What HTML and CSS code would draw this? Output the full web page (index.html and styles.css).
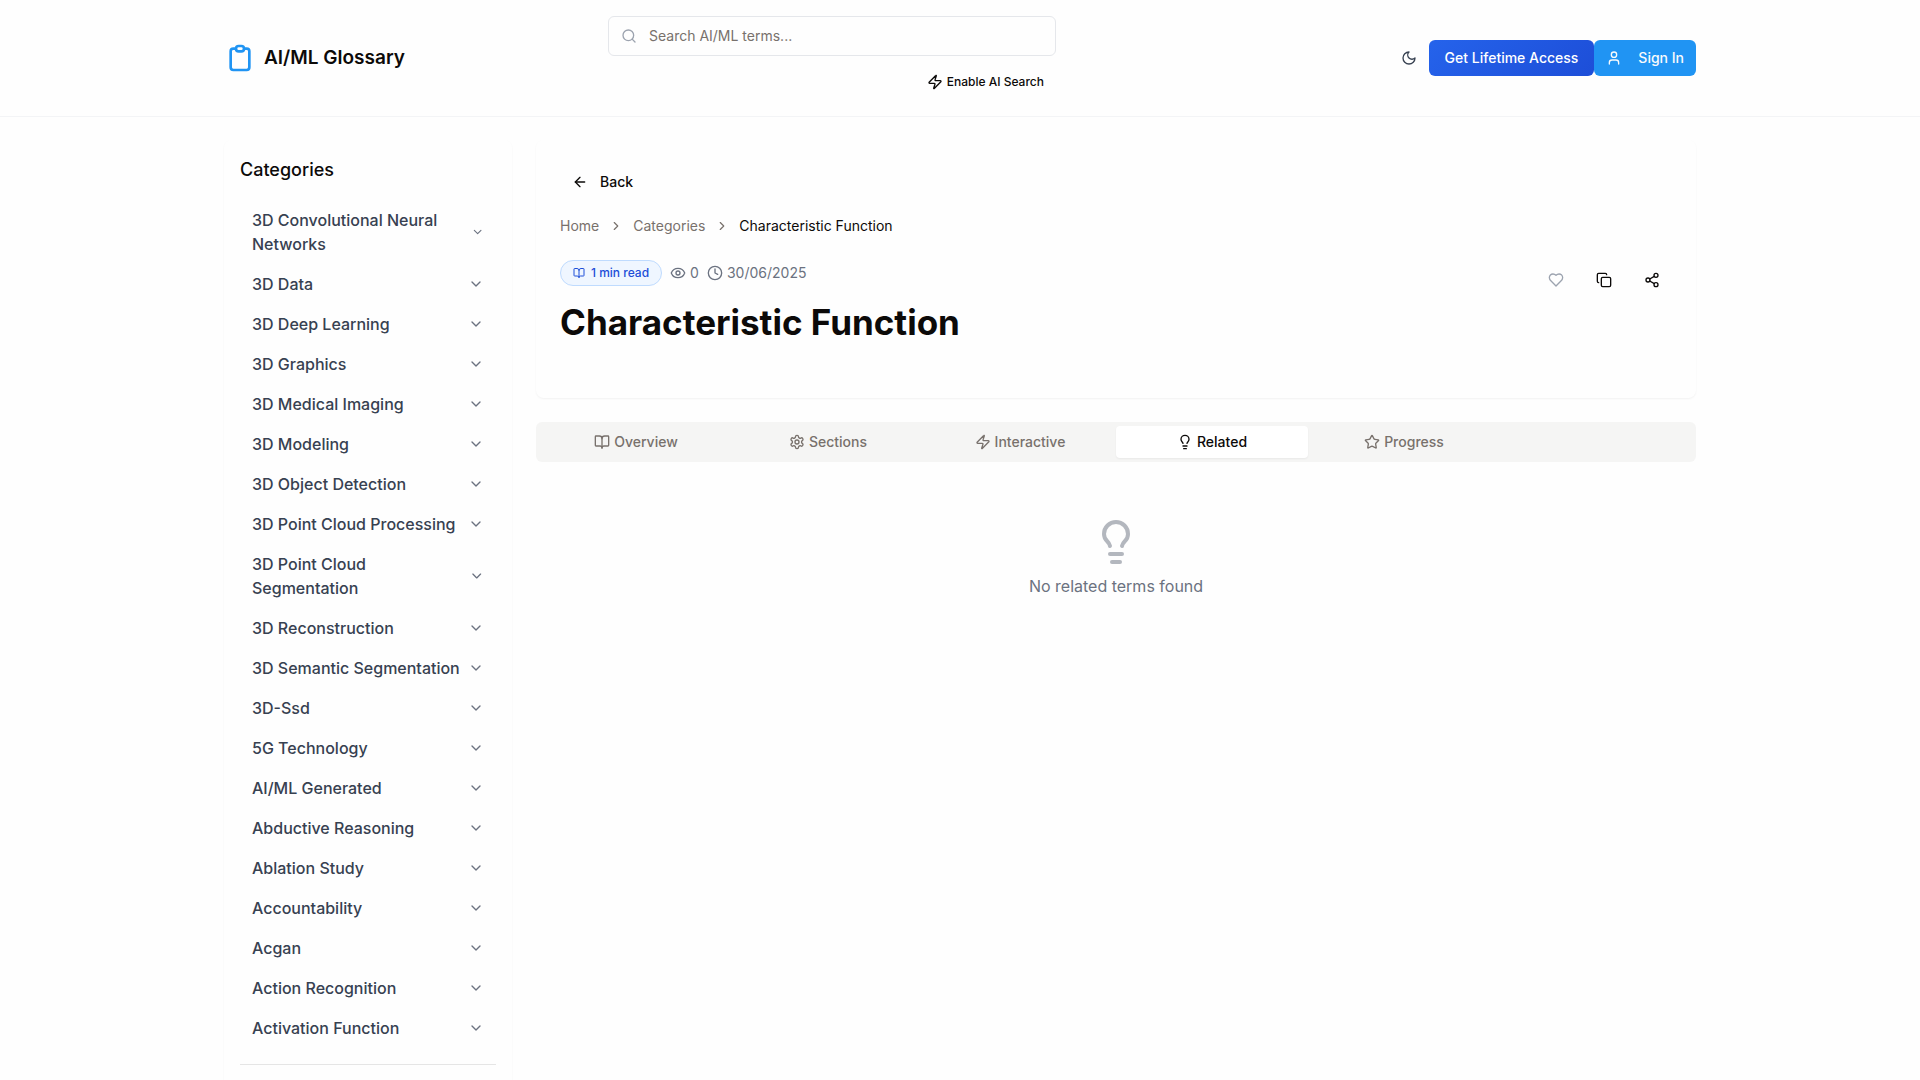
FILE: index.html
```html
<!DOCTYPE html>
<html lang="en">
<head>
<meta charset="utf-8">
<meta name="viewport" content="width=device-width, initial-scale=1">
<title>Characteristic Function - AI/ML Glossary</title>
<link rel="stylesheet" href="styles.css">
</head>
<body>
<svg class="sprite" aria-hidden="true">
  <symbol id="clipboard" viewBox="0 0 24 24"><path d="M9 5H7a2 2 0 00-2 2v12a2 2 0 002 2h10a2 2 0 002-2V7a2 2 0 00-2-2h-2M9 5a2 2 0 002 2h2a2 2 0 002-2M9 5a2 2 0 012-2h2a2 2 0 012 2"/></symbol>
  <symbol id="search" viewBox="0 0 24 24"><circle cx="11" cy="11" r="8"/><path d="m21 21-4.3-4.3"/></symbol>
  <symbol id="zap" viewBox="0 0 24 24"><path d="M4 14a1 1 0 0 1-.78-1.63l9.9-10.2a.5.5 0 0 1 .86.46l-1.92 6.02A1 1 0 0 0 13 10h7a1 1 0 0 1 .78 1.63l-9.9 10.2a.5.5 0 0 1-.86-.46l1.92-6.02A1 1 0 0 0 11 14z"/></symbol>
  <symbol id="moon" viewBox="0 0 24 24"><path d="M12 3a6 6 0 0 0 9 9 9 9 0 1 1-9-9Z"/></symbol>
  <symbol id="user" viewBox="0 0 24 24"><path d="M19 21v-2a4 4 0 0 0-4-4H9a4 4 0 0 0-4 4v2"/><circle cx="12" cy="7" r="4"/></symbol>
  <symbol id="down" viewBox="0 0 24 24"><path d="m6 9 6 6 6-6"/></symbol>
  <symbol id="right" viewBox="0 0 24 24"><path d="m9 18 6-6-6-6"/></symbol>
  <symbol id="back" viewBox="0 0 24 24"><path d="m12 19-7-7 7-7"/><path d="M19 12H5"/></symbol>
  <symbol id="book" viewBox="0 0 24 24"><path d="M12 7v14"/><path d="M3 18a1 1 0 0 1-1-1V4a1 1 0 0 1 1-1h5a4 4 0 0 1 4 4 4 4 0 0 1 4-4h5a1 1 0 0 1 1 1v13a1 1 0 0 1-1 1h-6a3 3 0 0 0-3 3 3 3 0 0 0-3-3z"/></symbol>
  <symbol id="eye" viewBox="0 0 24 24"><path d="M2.062 12.348a1 1 0 0 1 0-.696 10.75 10.75 0 0 1 19.876 0 1 1 0 0 1 0 .696 10.75 10.75 0 0 1-19.876 0"/><circle cx="12" cy="12" r="3"/></symbol>
  <symbol id="clock" viewBox="0 0 24 24"><circle cx="12" cy="12" r="10"/><path d="M12 6v6l4 2"/></symbol>
  <symbol id="heart" viewBox="0 0 24 24"><path d="M19 14c1.49-1.46 3-3.21 3-5.5A5.5 5.5 0 0 0 16.5 3c-1.76 0-3 .5-4.5 2-1.5-1.5-2.74-2-4.5-2A5.5 5.5 0 0 0 2 8.5c0 2.3 1.5 4.05 3 5.5l7 7Z"/></symbol>
  <symbol id="copy" viewBox="0 0 24 24"><rect x="8" y="8" width="14" height="14" rx="2"/><path d="M4 16c-1.1 0-2-.9-2-2V4c0-1.1.9-2 2-2h10c1.1 0 2 .9 2 2"/></symbol>
  <symbol id="share" viewBox="0 0 24 24"><circle cx="18" cy="5" r="3"/><circle cx="6" cy="12" r="3"/><circle cx="18" cy="19" r="3"/><path d="m8.59 13.51 6.83 3.98M15.41 6.51l-6.82 3.98"/></symbol>
  <symbol id="gear" viewBox="0 0 24 24"><path d="M12.22 2h-.44a2 2 0 0 0-2 2v.18a2 2 0 0 1-1 1.73l-.43.25a2 2 0 0 1-2 0l-.15-.08a2 2 0 0 0-2.73.73l-.22.38a2 2 0 0 0 .73 2.73l.15.1a2 2 0 0 1 1 1.72v.51a2 2 0 0 1-1 1.74l-.15.09a2 2 0 0 0-.73 2.73l.22.38a2 2 0 0 0 2.73.73l.15-.08a2 2 0 0 1 2 0l.43.25a2 2 0 0 1 1 1.73V20a2 2 0 0 0 2 2h.44a2 2 0 0 0 2-2v-.18a2 2 0 0 1 1-1.73l.43-.25a2 2 0 0 1 2 0l.15.08a2 2 0 0 0 2.73-.73l.22-.39a2 2 0 0 0-.73-2.73l-.15-.08a2 2 0 0 1-1-1.74v-.5a2 2 0 0 1 1-1.74l.15-.09a2 2 0 0 0 .73-2.73l-.22-.38a2 2 0 0 0-2.73-.73l-.15.08a2 2 0 0 1-2 0l-.43-.25a2 2 0 0 1-1-1.73V4a2 2 0 0 0-2-2z"/><circle cx="12" cy="12" r="3"/></symbol>
  <symbol id="bulb" viewBox="0 0 24 24"><path d="M15 14c.2-1 .7-1.7 1.5-2.5 1-.9 1.5-2.2 1.5-3.5A6 6 0 0 0 6 8c0 1 .2 2.2 1.5 3.5.7.7 1.3 1.5 1.5 2.5"/><path d="M9 18h6"/><path d="M10 22h4"/></symbol>
  <symbol id="star" viewBox="0 0 24 24"><path d="M11.525 2.295a.53.53 0 0 1 .95 0l2.31 4.679a2.123 2.123 0 0 0 1.595 1.16l5.166.756a.53.53 0 0 1 .294.904l-3.736 3.638a2.123 2.123 0 0 0-.611 1.878l.882 5.14a.53.53 0 0 1-.771.56l-4.618-2.428a2.122 2.122 0 0 0-1.973 0L6.396 21.01a.53.53 0 0 1-.77-.56l.881-5.139a2.122 2.122 0 0 0-.611-1.879L2.16 9.795a.53.53 0 0 1 .294-.906l5.165-.755a2.122 2.122 0 0 0 1.597-1.16z"/></symbol>
</svg>

<header class="header">
  <div class="container header-grid">
    <a class="brand" href="#"><svg class="icon brand-icon"><use href="#clipboard"/></svg>AI/ML Glossary</a>
    <form class="search">
      <label class="search-box" aria-label="Search terms">
        <svg class="icon search-icon"><use href="#search"/></svg>
        <input class="search-input" type="text" placeholder="Search AI/ML terms...">
      </label>
      <button class="ai-toggle" type="button"><svg class="icon"><use href="#zap"/></svg>Enable AI Search</button>
    </form>
    <div class="account">
      <button class="icon-button theme" type="button" aria-label="Toggle theme"><svg class="icon"><use href="#moon"/></svg></button>
      <button class="button lifetime" type="button">Get Lifetime Access</button>
      <button class="button sign-in" type="button"><svg class="icon"><use href="#user"/></svg>Sign In</button>
    </div>
  </div>
</header>

<div class="container layout">
  <aside class="sidebar">
    <h2 class="sidebar-title">Categories</h2>
    <nav class="categories" aria-label="Categories">
      <button class="category" type="button"><span>3D Convolutional Neural Networks</span><svg class="icon"><use href="#down"/></svg></button>
      <button class="category" type="button"><span>3D Data</span><svg class="icon"><use href="#down"/></svg></button>
      <button class="category" type="button"><span>3D Deep Learning</span><svg class="icon"><use href="#down"/></svg></button>
      <button class="category" type="button"><span>3D Graphics</span><svg class="icon"><use href="#down"/></svg></button>
      <button class="category" type="button"><span>3D Medical Imaging</span><svg class="icon"><use href="#down"/></svg></button>
      <button class="category" type="button"><span>3D Modeling</span><svg class="icon"><use href="#down"/></svg></button>
      <button class="category" type="button"><span>3D Object Detection</span><svg class="icon"><use href="#down"/></svg></button>
      <button class="category" type="button"><span>3D Point Cloud Processing</span><svg class="icon"><use href="#down"/></svg></button>
      <button class="category" type="button"><span>3D Point Cloud Segmentation</span><svg class="icon"><use href="#down"/></svg></button>
      <button class="category" type="button"><span>3D Reconstruction</span><svg class="icon"><use href="#down"/></svg></button>
      <button class="category" type="button"><span>3D Semantic Segmentation</span><svg class="icon"><use href="#down"/></svg></button>
      <button class="category" type="button"><span>3D-Ssd</span><svg class="icon"><use href="#down"/></svg></button>
      <button class="category" type="button"><span>5G Technology</span><svg class="icon"><use href="#down"/></svg></button>
      <button class="category" type="button"><span>AI/ML Generated</span><svg class="icon"><use href="#down"/></svg></button>
      <button class="category" type="button"><span>Abductive Reasoning</span><svg class="icon"><use href="#down"/></svg></button>
      <button class="category" type="button"><span>Ablation Study</span><svg class="icon"><use href="#down"/></svg></button>
      <button class="category" type="button"><span>Accountability</span><svg class="icon"><use href="#down"/></svg></button>
      <button class="category" type="button"><span>Acgan</span><svg class="icon"><use href="#down"/></svg></button>
      <button class="category" type="button"><span>Action Recognition</span><svg class="icon"><use href="#down"/></svg></button>
      <button class="category" type="button"><span>Activation Function</span><svg class="icon"><use href="#down"/></svg></button>
    </nav>
    <hr class="divider">
  </aside>

  <main class="main">
    <section class="card">
      <button class="button back" type="button"><svg class="icon"><use href="#back"/></svg>Back</button>
      <nav class="breadcrumb" aria-label="Breadcrumb">
        <a href="#">Home</a>
        <svg class="icon crumb-icon"><use href="#right"/></svg>
        <a href="#">Categories</a>
        <svg class="icon crumb-icon"><use href="#right"/></svg>
        <span class="current">Characteristic Function</span>
      </nav>
      <div class="term-head">
        <div>
          <div class="meta">
            <span class="badge"><svg class="icon badge-icon"><use href="#book"/></svg>1 min read</span>
            <span class="meta-item"><svg class="icon"><use href="#eye"/></svg>0</span>
            <span class="meta-item"><svg class="icon"><use href="#clock"/></svg>30/06/2025</span>
          </div>
          <h1 class="title">Characteristic Function</h1>
        </div>
        <div class="actions">
          <button class="icon-button favorite" type="button" aria-label="Favorite"><svg class="icon"><use href="#heart"/></svg></button>
          <button class="icon-button" type="button" aria-label="Copy link"><svg class="icon"><use href="#copy"/></svg></button>
          <button class="icon-button" type="button" aria-label="Share"><svg class="icon"><use href="#share"/></svg></button>
        </div>
      </div>
    </section>

    <div class="tabs" role="tablist">
      <button class="tab" type="button" role="tab"><svg class="icon"><use href="#book"/></svg>Overview</button>
      <button class="tab" type="button" role="tab"><svg class="icon"><use href="#gear"/></svg>Sections</button>
      <button class="tab" type="button" role="tab"><svg class="icon"><use href="#zap"/></svg>Interactive</button>
      <button class="tab active" type="button" role="tab" aria-selected="true"><svg class="icon"><use href="#bulb"/></svg>Related</button>
      <button class="tab" type="button" role="tab"><svg class="icon"><use href="#star"/></svg>Progress</button>
    </div>

    <section class="empty" role="tabpanel">
      <svg class="icon empty-icon"><use href="#bulb"/></svg>
      <p class="empty-text">No related terms found</p>
    </section>
  </main>
</div>
</body>
</html>
```
FILE: styles.css
```css
* {
  box-sizing: border-box;
}

body {
  display: flex;
  flex-direction: column;
  min-height: 100vh;
  margin: 0;
  background: #fefefe;
  color: #0c0a09;
  font-family: Inter, "Liberation Sans", sans-serif;
  font-size: 16px;
  line-height: 24px;
}

button,
input {
  margin: 0;
  padding: 0;
  border: 0;
  background: none;
  color: inherit;
  font: inherit;
}

a {
  color: inherit;
  text-decoration: none;
}

.sprite {
  display: none;
}

.icon {
  flex: 0 1 auto;
  width: 16px;
  height: 16px;
  fill: none;
  stroke: currentColor;
  stroke-width: 2;
  stroke-linecap: round;
  stroke-linejoin: round;
}

.container {
  width: 100%;
  max-width: 1536px;
  margin: 0 auto;
  padding: 0 32px;
}

/* Header */
.header {
  box-shadow: 0 1px 0 #f3f4f6;
}

.header-grid {
  display: grid;
  grid-template-columns: 3fr 448px 5fr;
  align-items: center;
  padding-top: 16px;
  padding-bottom: 16px;
}

.brand {
  display: flex;
  align-items: center;
  gap: 8px;
  font-size: 19px;
  font-weight: 600;
  line-height: 28px;
}

.brand-icon {
  width: 32px;
  height: 32px;
  color: #2094f3;
}

.search {
  display: flex;
  flex-direction: column;
  align-items: flex-end;
  gap: 8px;
}

.search-box {
  display: flex;
  align-items: center;
  gap: 12px;
  width: 100%;
  height: 40px;
  padding: 0 12px;
  border: 1px solid #e5e7eb;
  border-radius: 6px;
}

.search-icon {
  color: #9ca3af;
}

.search-input {
  flex: 1;
  outline: none;
  font-size: 14px;
  line-height: 20px;
}

.search-input::placeholder {
  color: #78716c;
}

.ai-toggle {
  display: flex;
  align-items: center;
  gap: 4px;
  height: 36px;
  padding: 0 12px;
  font-size: 12px;
  font-weight: 500;
  line-height: 16px;
}

.account {
  display: flex;
  align-items: center;
  justify-content: flex-end;
}

.icon-button {
  display: flex;
  align-items: center;
  justify-content: center;
  width: 40px;
  height: 40px;
}

.theme {
  color: #374151;
}

.button {
  display: flex;
  align-items: center;
  height: 36px;
  padding: 0 12px;
  border-radius: 6px;
  font-size: 14px;
  font-weight: 500;
  line-height: 20px;
}

.lifetime {
  padding: 0 16px;
  background: linear-gradient(135deg, #2563eb, #1d4ed8);
  color: #fff;
}

.sign-in {
  gap: 16px;
  background: #2094f3;
  color: #f8fafc;
}

/* Page body */
.layout {
  display: grid;
  flex: 1;
  grid-template-columns: 288px 1fr;
  gap: 24px;
  padding-top: 24px;
}

.sidebar {
  padding: 16px 16px 0;
  border-radius: 8px 8px 0 0;
  box-shadow: 0 1px 2px rgba(0, 0, 0, 0.05);
}

.sidebar-title {
  margin: 0 0 16px;
  font-size: 18px;
  font-weight: 500;
  line-height: 28px;
}

.category {
  display: flex;
  align-items: center;
  justify-content: space-between;
  width: 100%;
  padding: 8px 12px;
  color: #374151;
  font-weight: 500;
  text-align: left;
}

.category .icon {
  color: #6b7280;
}

.divider {
  margin: 16px 0 0;
  border: 0;
  border-top: 1px solid #e5e5e5;
}

/* Term card */
.card {
  padding: 24px 24px 56px;
  border-radius: 8px;
  box-shadow: 0 1px 2px rgba(0, 0, 0, 0.05);
}

.back {
  gap: 12px;
}

.breadcrumb {
  display: flex;
  align-items: center;
  gap: 10px;
  margin: 16px 0 24px;
  color: #78716c;
  font-size: 14px;
  line-height: 20px;
}

.crumb-icon {
  width: 14px;
  height: 14px;
}

.current {
  color: #0c0a09;
}

.term-head {
  display: flex;
  justify-content: space-between;
}

.meta {
  display: flex;
  align-items: center;
  gap: 8px;
  margin-bottom: 16px;
  color: #6b7280;
  font-size: 14px;
  line-height: 20px;
}

.meta-item {
  display: flex;
  align-items: center;
  gap: 4px;
}

.badge {
  display: flex;
  align-items: center;
  gap: 6px;
  padding: 4px 12px;
  border: 1px solid #bfdbfe;
  border-radius: 13px;
  background: #eff6ff;
  color: #1d4ed8;
  font-size: 12px;
  font-weight: 500;
  line-height: 16px;
}

.badge-icon {
  width: 12px;
  height: 12px;
}

.title {
  margin: 0;
  font-size: 35px;
  font-weight: 700;
  line-height: 40px;
}

.actions {
  display: flex;
  gap: 8px;
}

.favorite {
  color: #9ca3af;
}

/* Tabs */
.tabs {
  display: grid;
  grid-template-columns: repeat(6, 1fr);
  height: 40px;
  margin-top: 24px;
  padding: 4px;
  border-radius: 6px;
  background: #f5f5f4;
}

.tab {
  display: flex;
  align-items: center;
  justify-content: center;
  gap: 4px;
  border-radius: 4px;
  color: #78716c;
  font-size: 14px;
  font-weight: 500;
  line-height: 20px;
}

.tab.active {
  background: #fff;
  color: #0c0a09;
  box-shadow: 0 1px 2px rgba(0, 0, 0, 0.05);
}

.empty {
  display: flex;
  flex-direction: column;
  align-items: center;
  gap: 8px;
  padding: 56px 0;
  color: #6b7280;
}

.empty-icon {
  width: 48px;
  height: 48px;
  opacity: 0.5;
}

.empty-text {
  margin: 0;
}
```
